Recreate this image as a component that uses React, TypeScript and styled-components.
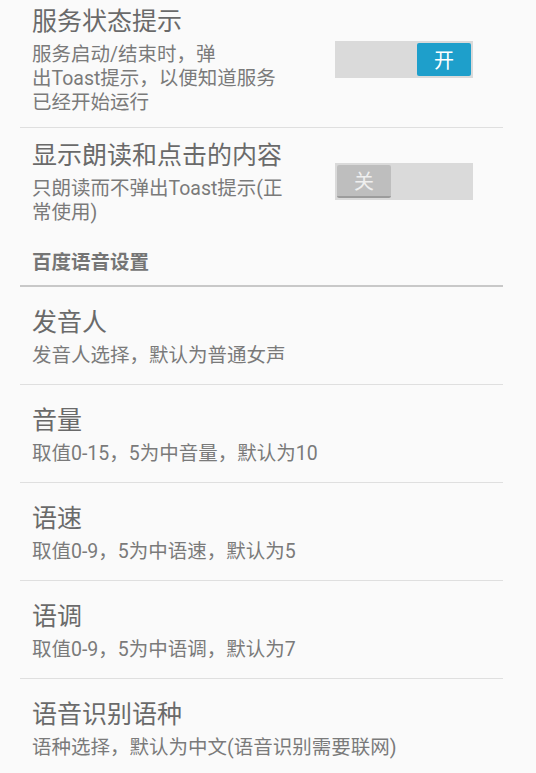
import styled, { createGlobalStyle } from "styled-components";

const GlobalStyle = createGlobalStyle`
  body {
    margin: 0;
    background: #fafafa;
    font-family: Roboto, "Noto Sans CJK SC", sans-serif;
  }
`;

const List = styled.div`
  margin: 0 33px 0 20px;
`;

const Row = styled.div<{ $top: number; $bottom: number; $divider?: boolean }>`
  display: flex;
  align-items: center;
  padding: ${(p) => p.$top}px 30px ${(p) => p.$bottom}px 12px;
  border-bottom: ${(p) => (p.$divider ? "1px solid #dfdfdf" : "none")};
`;

const TextBlock = styled.div`
  flex: 1;
  min-width: 0;
`;

const Title = styled.div`
  font-size: 25px;
  line-height: 32px;
  color: #6a6a6a;
`;

const Summary = styled.div`
  margin-top: 5px;
  font-size: 19.5px;
  line-height: 24px;
  color: #7a7a7a;
`;

const Track = styled.div<{ $on: boolean }>`
  display: flex;
  justify-content: ${(p) => (p.$on ? "flex-end" : "flex-start")};
  align-items: center;
  box-sizing: border-box;
  width: 138px;
  height: 37px;
  padding: 2px;
  background: #dadada;
  margin-top: -3px;
`;

const Thumb = styled.div<{ $on: boolean }>`
  display: flex;
  align-items: center;
  justify-content: center;
  box-sizing: border-box;
  width: 54px;
  height: 33px;
  font-size: 20px;
  background: ${(p) => (p.$on ? "#1e9fcb" : "#bebebe")};
  color: ${(p) => (p.$on ? "#ffffff" : "#efefef")};
  border-radius: 2px;
  border-bottom: ${(p) => (p.$on ? "none" : "2px solid #9c9c9c")};
`;

const Category = styled.div`
  padding: 26px 12px 10px;
  font-size: 19.5px;
  line-height: 24px;
  font-weight: bold;
  color: #757575;
  border-bottom: 2px solid #c8c8c8;
`;

type SwitchPref = {
  title: string;
  lines: string[];
  on: boolean;
  top: number;
  bottom: number;
  divider: boolean;
};

const switches: SwitchPref[] = [
  {
    title: "服务状态提示",
    lines: ["服务启动/结束时，弹", "出Toast提示，以便知道服务", "已经开始运行"],
    on: true,
    top: 6,
    bottom: 12,
    divider: true,
  },
  {
    title: "显示朗读和点击的内容",
    lines: ["只朗读而不弹出Toast提示(正", "常使用)"],
    on: false,
    top: 12,
    bottom: 0,
    divider: false,
  },
];

const prefs = [
  { title: "发音人", summary: "发音人选择，默认为普通女声" },
  { title: "音量", summary: "取值0-15，5为中音量，默认为10" },
  { title: "语速", summary: "取值0-9，5为中语速，默认为5" },
  { title: "语调", summary: "取值0-9，5为中语调，默认为7" },
  { title: "语音识别语种", summary: "语种选择，默认为中文(语音识别需要联网)" },
];

export default function App() {
  return (
    <>
      <GlobalStyle />
      <List>
        {switches.map((s) => (
          <Row key={s.title} $top={s.top} $bottom={s.bottom} $divider={s.divider}>
            <TextBlock>
              <Title>{s.title}</Title>
              <Summary>
                {s.lines.map((l, i) => (
                  <div key={i}>{l}</div>
                ))}
              </Summary>
            </TextBlock>
            <Track $on={s.on}>
              <Thumb $on={s.on}>{s.on ? "开" : "关"}</Thumb>
            </Track>
          </Row>
        ))}
        <Category>百度语音设置</Category>
        {prefs.map((p) => (
          <Row key={p.title} $top={20} $bottom={16} $divider>
            <TextBlock>
              <Title>{p.title}</Title>
              <Summary>{p.summary}</Summary>
            </TextBlock>
          </Row>
        ))}
      </List>
    </>
  );
}
